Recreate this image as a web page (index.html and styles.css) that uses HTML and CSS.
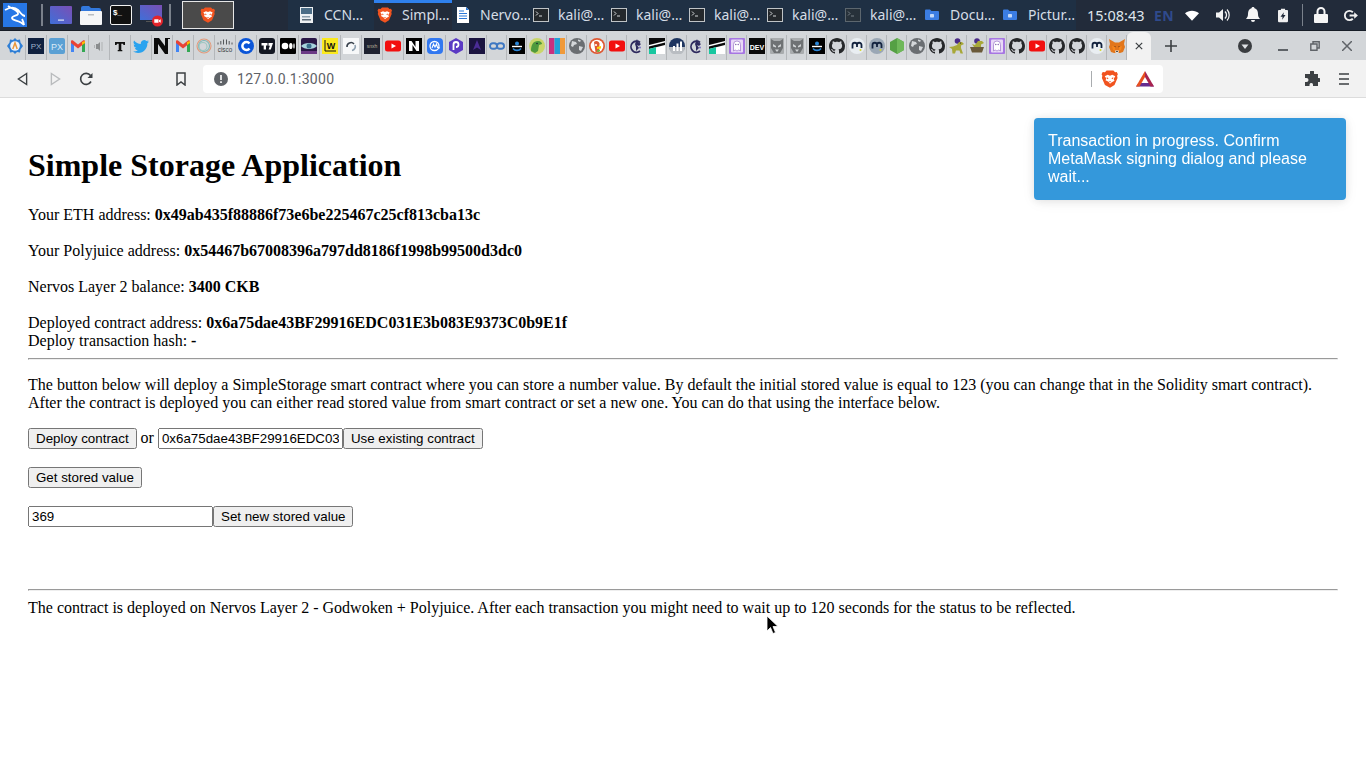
FILE: index.html
```html
<!DOCTYPE html>
<html lang="en">
<head>
<meta charset="utf-8">
<title>Simple Storage Application</title>
<link rel="stylesheet" href="styles.css">
</head>
<body>
<svg class="defs" width="0" height="0" aria-hidden="true">
  <defs><linearGradient id="grad" x1="0" y1="1" x2="1" y2="0"><stop offset="0" stop-color="#3f6fd8"/><stop offset="1" stop-color="#7a4fb5"/></linearGradient></defs>
  <symbol id="gear" viewBox="0 0 16 16"><path fill="#2f7fd6" d="M8 0l2 2 3-.5.5 3L16 8l-2.500 3.500-.5 3-3-.5-2 2-2-2-3 .5-.5-3L0 8l2.500-3.500.5-3 3 .5z"/><circle cx="8" cy="8" r="4.800" fill="#eef3f8"/><path fill="none" stroke="#e8973a" stroke-width="1.500" d="M5.800 11L8 5l2.200 6"/></symbol>
  <symbol id="gmail" viewBox="0 0 16 16"><path fill="#4285f4" d="M1 14V4l3 2v8z"/><path fill="#34a853" d="M15 14V4l-3 2v8z"/><path fill="#ea4335" d="M1 5V3.500C1 2.500 2 2 3 2.600L8 6.500l5-3.900C14 2 15 2.500 15 3.500V5l-7 5.500z"/><path fill="#fbbc04" d="M12 4l3-1v2l-3 2z"/></symbol>
  <symbol id="speak" viewBox="0 0 16 16"><path fill="#8a8d8f" d="M5 6h2l2-2v9l-2-2H5z"/><path fill="#b0b2b4" d="M10.500 4h1v9h-1zM3 7h1v3H3z"/></symbol>
  <symbol id="tt" viewBox="0 0 16 16"><path fill="#111" d="M3 4h10v3h-1.500L11 5.800H9.300V12h1v1.200H5.700V12h1V5.800H5L4.500 7H3z"/></symbol>
  <symbol id="tw" viewBox="0 0 16 16"><path fill="#2aa3ef" d="M5.026 15c6.038 0 9.341-5.003 9.341-9.334 0-.14 0-.282-.006-.422A6.685 6.685 0 0 0 16 3.542a6.658 6.658 0 0 1-1.889.518 3.301 3.301 0 0 0 1.447-1.817 6.533 6.533 0 0 1-2.087.793A3.286 3.286 0 0 0 7.875 6.030a9.325 9.325 0 0 1-6.767-3.429 3.289 3.289 0 0 0 1.018 4.382A3.323 3.323 0 0 1 .640 6.575v.045a3.288 3.288 0 0 0 2.632 3.218 3.203 3.203 0 0 1-.865.115 3.230 3.230 0 0 1-.614-.057 3.283 3.283 0 0 0 3.067 2.277A6.588 6.588 0 0 1 .780 13.580a6.320 6.320 0 0 1-.780-.045A9.344 9.344 0 0 0 5.026 15z"/></symbol>
  <symbol id="nbig" viewBox="0 0 16 16"><path fill="#0b0b0b" d="M0 0h5l6 8V0h5v1h-2v15h-3L4 6v10H0V1z"/></symbol>
  <symbol id="rings" viewBox="0 0 16 16"><g fill="none" stroke-width="1.100"><circle cx="8" cy="8" r="7" stroke="#e39a7a"/><circle cx="8" cy="8" r="5.500" stroke="#7fb5b5"/><circle cx="7" cy="8.500" r="4" stroke="#9cc7c0"/></g></symbol>
  <symbol id="coin" viewBox="0 0 16 16"><circle cx="8" cy="8" r="8" fill="#0a55d8"/><path fill="none" stroke="#fff" stroke-width="2.500" d="M11.500 5.500a4 4 0 1 0 0 5"/></symbol>
  <symbol id="tv" viewBox="0 0 16 16"><rect width="16" height="16" rx="3" fill="#131722"/><path fill="#fff" d="M2.500 5h6v2.500H7V11.500H4.700V7.500H2.500zM9.500 5H14l-2.200 6.500H9.600l1.300-3.800H9.500z"/></symbol>
  <symbol id="med" viewBox="0 0 16 16"><rect width="16" height="16" rx="1" fill="#000"/><circle cx="5" cy="8" r="3.300" fill="#fff"/><ellipse cx="10.800" cy="8" rx="1.700" ry="3.100" fill="#fff"/><ellipse cx="14" cy="8" rx=".7" ry="2.800" fill="#fff"/></symbol>
  <symbol id="eye" viewBox="0 0 16 16"><rect width="16" height="16" rx="2" fill="#2a1747"/><path fill="#a8d3dd" d="M0 8c3-4 13-4 16 0-3 4-13 4-16 0z"/><circle cx="8" cy="8" r="2.500" fill="#3a6d8c"/><rect y="13" width="16" height="3" fill="#6b3a86"/></symbol>
  <symbol id="swirl" viewBox="0 0 16 16"><rect width="16" height="16" fill="#f7f8f9"/><path fill="none" stroke="#39424d" stroke-width="1.600" d="M4 9a4 4 0 0 1 7-3"/><path fill="none" stroke="#8ea0b0" stroke-width="1.600" d="M12 7a4 4 0 0 1-3 5.500"/></symbol>
  <symbol id="yt" viewBox="0 0 16 16"><rect y="2.500" width="16" height="11" rx="2.500" fill="#f20f0f"/><path fill="#fff" d="M6.500 5.500l4.500 2.500-4.500 2.500z"/></symbol>
  <symbol id="nb" viewBox="0 0 16 16"><rect width="16" height="16" fill="#000"/><path fill="#fff" d="M3 3h2.500l4 6V3H13v10h-2.500l-4-6v6H3z"/></symbol>
  <symbol id="cmc" viewBox="0 0 16 16"><rect width="16" height="16" rx="4" fill="#3278f0"/><circle cx="7.500" cy="8" r="4.500" fill="none" stroke="#fff" stroke-width="1.300"/><path fill="none" stroke="#fff" stroke-width="1.100" d="M5 10l1.500-4L8 9l1.500-3 1 3.500 2.500.5"/></symbol>
  <symbol id="hexp" viewBox="0 0 16 16"><path fill="#5b3ac4" d="M8 0l7 4v8l-7 4-7-4V4z"/><path fill="none" stroke="#fff" stroke-width="1.800" d="M5.500 12V6.500a2.500 2.500 0 1 1 2.500 2.500"/></symbol>
  <symbol id="dpur" viewBox="0 0 16 16"><rect width="16" height="16" fill="#1b1440"/><path fill="#4b2c96" d="M8 2l4 10-4-2.500L4 12z"/></symbol>
  <symbol id="chain" viewBox="0 0 16 16"><g fill="none" stroke="#3f78c2" stroke-width="1.900"><rect x="1" y="5.200" width="7" height="5.600" rx="2.800"/><rect x="8" y="5.200" width="7" height="5.600" rx="2.800"/></g></symbol>
  <symbol id="arc" viewBox="0 0 16 16"><rect width="16" height="16" fill="#000"/><circle cx="8" cy="5.500" r="2" fill="#2a86d8"/><path fill="none" stroke="#fff" stroke-width="1.400" d="M3 8.500h10"/><path fill="none" stroke="#2a86d8" stroke-width="1.600" d="M4 10.500c2 2.500 6 2.500 8 0"/></symbol>
  <symbol id="parrot" viewBox="0 0 16 16"><circle cx="8" cy="8" r="8" fill="#c9d66a"/><path fill="#4f9a3d" d="M2 13c0-6 2-10 7-10 3 0 4 2 4 3l-3 1-1 6-3 2z"/><circle cx="8" cy="5.500" r=".8" fill="#123"/></symbol>
  <symbol id="stripes" viewBox="0 0 16 16"><path fill="#c8307f" d="M0 0h5.500v16H0z"/><path fill="#21a0d8" d="M5.500 0H11v16H5.500z"/><path fill="#f09a3a" d="M11 0h5v16h-5z"/></symbol>
  <symbol id="globe" viewBox="0 0 16 16"><circle cx="8" cy="8" r="8" fill="#6a6e72"/><path fill="#d3d6d9" d="M3 3l4 1 1 2-3 1-1 2-2-1zM10 8l4 1-2 4-2-1zM9 1.500l3 1-1 1.500-2-1z"/></symbol>
  <symbol id="duck" viewBox="0 0 16 16"><circle cx="8" cy="8" r="8" fill="#de5833"/><circle cx="8" cy="8" r="6.300" fill="#fff"/><path fill="#de5833" d="M5 4c2-2 5-1 5.500 1.500L10 14H6.500z"/><circle cx="7" cy="7" r="1.100" fill="#fff"/><path fill="#fdd209" d="M8 9l4-1v2.500l-4 .5z"/><path fill="#65bc46" d="M8 12.500l3-1v2l-3 .5z"/></symbol>
  <symbol id="knight" viewBox="0 0 16 16"><path fill="none" stroke="#2e2a5e" stroke-width="1.800" d="M11 4.500A5.500 5.500 0 1 0 11 13"/><path fill="#2e2a5e" d="M8 1l1 3 3 2-2 2-2-1 2 3-3 3V9L6 6z"/><circle cx="11" cy="9.500" r="1" fill="#7a6fc2"/></symbol>
  <symbol id="flag" viewBox="0 0 16 16"><rect width="16" height="16" fill="#fff"/><path fill="#0c0c0c" d="M0 0h16v3L0 7z"/><path fill="#0c0c0c" d="M0 8.500l16-4V7L0 11z"/><path fill="#19c7a0" d="M0 11l7-2v7H0z"/></symbol>
  <symbol id="mchart" viewBox="0 0 16 16"><circle cx="8" cy="8" r="8" fill="#1e3560"/><path fill="#b9bdc2" d="M0 9h16a8 8 0 0 1-16 0z"/><path fill="#fff" d="M4 8h2v5H4zM7.500 5.500h2V13h-2zM11 3.500h2V13h-2z"/></symbol>
  <symbol id="ghost" viewBox="0 0 16 16"><rect width="16" height="16" rx="1" fill="#a676e2"/><rect x="2" y="1.500" width="12" height="13" rx="1" fill="#e8d9f7"/><path fill="#fff" stroke="#9a75c8" stroke-width=".7" d="M4.500 13V6.500a3.500 3.500 0 0 1 7 0V13l-1.700-1-1.800 1-1.800-1z"/><circle cx="6.800" cy="6.500" r=".7" fill="#7a5aa8"/><circle cx="9.200" cy="6.500" r=".7" fill="#7a5aa8"/></symbol>
  <symbol id="wolf" viewBox="0 0 16 16"><rect x="1" y="0" width="14" height="16" rx="1" fill="#a9acae"/><path fill="#6f7274" d="M2 1l3 2h6l3-2v9l-3 5H5l-3-5z"/><path fill="#d0d3d5" d="M4 6l3 2v1.500L4 8.500zM12 6L9 8v1.500l3-1zM6 11.500h4L8 14z"/></symbol>
  <symbol id="gh" viewBox="0 0 16 16"><path fill="#26282a" d="M8 0C3.580 0 0 3.580 0 8c0 3.540 2.290 6.530 5.470 7.590.4.070.55-.17.55-.38 0-.19-.01-.82-.01-1.490-2.010.37-2.530-.49-2.690-.94-.09-.23-.48-.94-.82-1.130-.28-.15-.68-.52-.01-.53.630-.01 1.080.58 1.230.82.720 1.210 1.870.87 2.330.66.070-.52.280-.87.510-1.070-1.780-.2-3.640-.89-3.640-3.950 0-.87.310-1.590.820-2.150-.08-.2-.36-1.020.08-2.120 0 0 .670-.21 2.200.82.640-.18 1.320-.27 2-.27.680 0 1.360.090 2 .27 1.530-1.040 2.200-.82 2.200-.82.440 1.100.160 1.920.080 2.120.510.560.820 1.270.820 2.150 0 3.070-1.870 3.750-3.650 3.950.290.250.540.730.540 1.480 0 1.070-.01 1.930-.01 2.200 0 .21.150.46.550.38A8.013 8.013 0 0 0 16 8c0-4.420-3.580-8-8-8z"/></symbol>
  <symbol id="mw" viewBox="0 0 16 16"><circle cx="8" cy="8" r="8" fill="#e9eef2"/><path fill="none" stroke="#13233f" stroke-width="1.800" d="M3.500 10.500V7a2 2 0 0 1 4.500 0v2M8 7a2 2 0 0 1 4.500 0v3"/><circle cx="11.500" cy="12" r="1" fill="#d4d52a"/></symbol>
  <symbol id="mg" viewBox="0 0 16 16"><circle cx="8" cy="8" r="8" fill="#9aa7b5"/><path fill="none" stroke="#13233f" stroke-width="1.800" d="M3.500 10.500V7a2 2 0 0 1 4.500 0v2M8 7a2 2 0 0 1 4.500 0v3"/><circle cx="11.500" cy="12" r="1" fill="#d4d52a"/></symbol>
  <symbol id="node" viewBox="0 0 16 16"><path fill="#55a044" d="M8 0l7 4v8l-7 4-7-4V4z"/><path fill="#6fb85a" d="M8 0l7 4v8l-7 4z"/></symbol>
  <symbol id="dino" viewBox="0 0 16 16"><circle cx="8.500" cy="3" r="2.800" fill="#4a2a86"/><path fill="#a8a838" d="M10 4h3l2 2-3 1.500V10l2 5.500h-2.500l-1-3H7l-1 3H3.500L3 11 0 9l4-.5L8 7z"/><circle cx="11.500" cy="5" r=".6" fill="#222"/></symbol>
  <symbol id="dinon" viewBox="0 0 16 16"><circle cx="8" cy="3" r="2.800" fill="#4a2a86"/><path fill="#a8a838" d="M9 3h4l2 2-3 1.500V9H5L3 6l3 1z"/><path fill="#6a5a3a" d="M1 9h14l-2 5.500H3z"/></symbol>
  <symbol id="fox" viewBox="0 0 16 16"><path fill="#e2761b" d="M0 1l6 3.500h4L16 1l-1 5 1 3-2 5-3 1H5l-3-1-2-5 1-3z"/><path fill="#f6851b" d="M3 8l3 1v4l-2-1zM13 8l-3 1v4l2-1z"/><path fill="#763d16" d="M5 8h1.500v1.500zM11 8H9.500v1.500z"/><path fill="#e4e0d8" d="M6 12.500h4L9.500 15h-3z"/><path fill="#222" d="M7 13h2l-.5 1h-1z"/></symbol>
  <symbol id="brave" viewBox="0 0 16 16"><path fill="#f1531f" d="M5 .500h6L12.500 2l1.500-.2 1 2-.7 1.200.4 2-2.700 6.300L8 15.800 3.500 13.300.8 7l.4-2L.5 3.800l1-2L3.500 2z"/><path fill="#fff" d="M3.300 5.500L6 4.300l2 .7 2-.7 2.700 1.200-1.500 2.500.8 1.500-2.700 1.500L8 12.300l-1.300-1.800L4 9l.8-1.500z"/><path fill="#f1531f" d="M6.800 7.300L5 6.500l.5 1.800zM9.200 7.300l1.800-.8-.5 1.800zM7 10h2l-1 1.200z"/></symbol>
  <symbol id="term" viewBox="0 0 16 16"><rect x=".5" y="1.500" width="15" height="13" fill="#24282c" stroke="#bfc3c6"/><path fill="none" stroke="#d6d9db" d="M3 4.500l2 2-2 2M6 9h3"/></symbol>
  <symbol id="termd" viewBox="0 0 16 16"><rect x=".5" y="1.500" width="15" height="13" fill="#2a3238" stroke="#6c7479"/><path fill="none" stroke="#8b9398" d="M3 4.500l2 2-2 2M6 9h3"/></symbol>
  <symbol id="fold" viewBox="0 0 16 16"><path fill="#3b7de3" d="M1 3.500a1 1 0 0 1 1-1h4L7.500 4H14a1 1 0 0 1 1 1v7a1 1 0 0 1-1 1H2a1 1 0 0 1-1-1z"/><rect x="6" y="7" width="4" height="3.500" rx=".7" fill="#c4d9f8"/></symbol>
  <symbol id="doc" viewBox="0 0 16 16"><path fill="#fff" d="M2 0h9l3 3v13H2z"/><path fill="#2b78d8" d="M11 0l3 3h-3zM4 6h8v1H4zM4 8.500h8v1H4zM4 11h8v1H4zM4 3.500h5v1H4z"/></symbol>
  <symbol id="ccn" viewBox="0 0 16 16"><rect x="1" width="13" height="16" fill="#eef1f3"/><rect x="2" y="1" width="11" height="6" fill="#4c6d86"/><rect x="3" y="9" width="8" height="1.500" fill="#8ea0ad"/><rect x="3" y="12" width="9" height="1.500" fill="#5f6f7b"/></symbol>
</svg>

<div class="taskbar">
  <div class="launchers">
    <svg class="kali" viewBox="0 0 24 24"><rect width="24" height="24" fill="#2777e6"/><path fill="none" stroke="#fff" stroke-width="1.800" d="M2 7c5-3 10-3 13 0 3 3 4 6 7 6M5 3c4 3 9 4 10 7 1 3-6 2-6 5 0 3 8 2 12 7M19 16c1 2 2 4 2 6"/></svg>
    <span class="vsep vsep-a"></span>
    <svg class="launch launch-a" viewBox="0 0 22 18"><rect width="22" height="18" rx="1" fill="url(#grad)"/><rect x="8" y="13.500" width="6" height="1.200" fill="#dfe6f5"/></svg>
    <svg class="launch" viewBox="0 0 22 20"><path fill="#3278dc" d="M1 3a2 2 0 0 1 2-2h6l2 2h8a2 2 0 0 1 2 2v3H1z"/><rect y="6" width="22" height="14" rx="1" fill="#f5f6f7"/><rect x="8" y="9" width="6" height="1.500" fill="#b9bdc2"/></svg>
    <svg class="launch" viewBox="0 0 22 20"><rect x=".5" y=".5" width="21" height="19" rx="1.500" fill="#111" stroke="#f2f2f2"/><text x="3" y="10" class="ft" font-size="8" font-weight="700" fill="#fff">$_</text></svg>
    <svg class="launch launch-last" viewBox="0 0 22 20"><rect width="22" height="15" fill="url(#grad)"/><rect x="6" y="16" width="10" height="1" fill="#555"/><circle cx="17.500" cy="16" r="5.500" fill="#e3242b"/><path fill="#fff" d="M14.300 14.300h4.200v3.400h-4.200zM19 15.300l1.700-1.100v3.600L19 16.700z"/></svg>
    <span class="vsep vsep-b"></span>
    <div class="brave-btn"><svg class="ic16" aria-hidden="true"><use href="#brave"/></svg></div>
  </div>
  <div class="tasks">
    <div class="task"><svg class="ic16"><use href="#ccn"/></svg><span>CCN…</span></div>
    <div class="task active"><svg class="ic16"><use href="#brave"/></svg><span>Simpl…</span></div>
    <div class="task"><svg class="ic16"><use href="#doc"/></svg><span>Nervo…</span></div>
    <div class="task"><svg class="ic16"><use href="#term"/></svg><span>kali@…</span></div>
    <div class="task"><svg class="ic16"><use href="#term"/></svg><span>kali@…</span></div>
    <div class="task"><svg class="ic16"><use href="#term"/></svg><span>kali@…</span></div>
    <div class="task"><svg class="ic16"><use href="#term"/></svg><span>kali@…</span></div>
    <div class="task dim"><svg class="ic16"><use href="#termd"/></svg><span>kali@…</span></div>
    <div class="task task-f"><svg class="ic16"><use href="#fold"/></svg><span>Docu…</span></div>
    <div class="task task-f"><svg class="ic16"><use href="#fold"/></svg><span>Pictur…</span></div>
  </div>
  <div class="tray">
    <span class="clock">15:08:43</span>
    <span class="lang">EN</span>
    <svg class="wifi" viewBox="0 0 16 12"><path fill="#fff" d="M0 3.500C4-.5 12-.5 16 3.500L8 12z"/></svg>
    <svg class="vol" viewBox="0 0 16 16"><path fill="#f2f2f2" d="M1 5.500h3L8 2v12l-4-3.500H1z"/><path fill="none" stroke="#f2f2f2" stroke-width="1.500" d="M10 4.500a5 5 0 0 1 0 7"/><path fill="none" stroke="#f2f2f2" stroke-width="1.200" d="M12 2.500a8 8 0 0 1 0 11"/></svg>
    <svg class="bell" viewBox="0 0 14 16"><path fill="#f5f5f5" d="M7 0c1 0 1.500.6 1.500 1.300C11 2 12 4 12 7c0 2 .6 3.500 2 5H0c1.400-1.500 2-3 2-5 0-3 1-5 3.500-5.700C5.500.6 6 0 7 0zM5 13h4a2 2 0 0 1-4 0z"/></svg>
    <svg class="batt" viewBox="0 0 12 16"><path fill="#f0f0f0" d="M3.500 0h5v1.500H11a1 1 0 0 1 1 1V15a1 1 0 0 1-1 1H1a1 1 0 0 1-1-1V2.500a1 1 0 0 1 1-1h2.500z"/><path fill="#1d2636" d="M7 4L3 9.500h2.500L5 13l4-5.500H6.500z"/></svg>
    <span class="vsep vsep-c"></span>
    <svg class="lock" viewBox="0 0 14 16"><path fill="none" stroke="#f5f5f5" stroke-width="2" d="M3.500 8V4.500a3.500 3.500 0 0 1 7 0V8"/><rect y="7" width="14" height="9" rx="1" fill="#f5f5f5"/></svg>
    <svg class="power" viewBox="0 0 16 14"><path fill="none" stroke="#f0f0f0" stroke-width="2" d="M10.500 3.500a5 5 0 1 0 0 7"/><path fill="#f0f0f0" d="M7 6h5V3.500L16 7l-4 3.500V8H7z"/></svg>
  </div>
</div>

<div class="tabstrip">
  <span class="fav"><svg class="ic16"><use href="#gear"/></svg></span>
  <span class="fav"><svg class="ic16" viewBox="0 0 16 16"><rect width="16" height="16" fill="#10213f"/><text x="8" y="11" class="ft" font-size="8" fill="#9fb3cc" text-anchor="middle">PX</text></svg></span>
  <span class="fav"><svg class="ic16" viewBox="0 0 16 16"><rect width="16" height="16" rx="2" fill="#5aa0d4"/><text x="8" y="11.500" class="ft" font-size="9" fill="#dcebf6" text-anchor="middle">PX</text></svg></span>
  <span class="fav"><svg class="ic16"><use href="#gmail"/></svg></span>
  <span class="fav"><svg class="ic16"><use href="#speak"/></svg></span>
  <span class="fav"><svg class="ic16"><use href="#tt"/></svg></span>
  <span class="fav"><svg class="ic16"><use href="#tw"/></svg></span>
  <span class="fav"><svg class="ic16"><use href="#nbig"/></svg></span>
  <span class="fav"><svg class="ic16"><use href="#gmail"/></svg></span>
  <span class="fav"><svg class="ic16"><use href="#rings"/></svg></span>
  <span class="fav"><svg class="ic16" viewBox="0 0 16 16"><path stroke="#44484c" stroke-width=".9" d="M1 4.500v2M3.800 3v3.500M6.500 1.500v5M9.500 1.500v5M12.200 3v3.500M15 4.500v2"/><text x="8" y="14" class="ft" font-size="6.300" fill="#3b3f43" text-anchor="middle">cisco</text></svg></span>
  <span class="fav"><svg class="ic16"><use href="#coin"/></svg></span>
  <span class="fav"><svg class="ic16"><use href="#tv"/></svg></span>
  <span class="fav"><svg class="ic16"><use href="#med"/></svg></span>
  <span class="fav"><svg class="ic16"><use href="#eye"/></svg></span>
  <span class="fav"><svg class="ic16" viewBox="0 0 16 16"><rect width="16" height="16" fill="#fbe91e"/><path fill="none" stroke="#111" d="M3 2v11h11"/><text x="9" y="10.500" class="ft" font-size="9" font-weight="700" fill="#111" text-anchor="middle">W</text></svg></span>
  <span class="fav"><svg class="ic16"><use href="#swirl"/></svg></span>
  <span class="fav"><svg class="ic16" viewBox="0 0 16 16"><rect width="16" height="16" fill="#1f2230"/><text x="8" y="10" class="ft" font-size="5" fill="#b9b39d" text-anchor="middle">snxh</text></svg></span>
  <span class="fav"><svg class="ic16"><use href="#yt"/></svg></span>
  <span class="fav"><svg class="ic16"><use href="#nb"/></svg></span>
  <span class="fav"><svg class="ic16"><use href="#cmc"/></svg></span>
  <span class="fav"><svg class="ic16"><use href="#hexp"/></svg></span>
  <span class="fav nar"><svg class="ic16"><use href="#dpur"/></svg></span>
  <span class="fav nar"><svg class="ic16"><use href="#chain"/></svg></span>
  <span class="fav nar"><svg class="ic16"><use href="#arc"/></svg></span>
  <span class="fav nar"><svg class="ic16"><use href="#parrot"/></svg></span>
  <span class="fav nar"><svg class="ic16"><use href="#stripes"/></svg></span>
  <span class="fav nar"><svg class="ic16"><use href="#globe"/></svg></span>
  <span class="fav nar"><svg class="ic16"><use href="#duck"/></svg></span>
  <span class="fav nar"><svg class="ic16"><use href="#yt"/></svg></span>
  <span class="fav nar"><svg class="ic16"><use href="#knight"/></svg></span>
  <span class="fav nar"><svg class="ic16"><use href="#flag"/></svg></span>
  <span class="fav nar"><svg class="ic16"><use href="#mchart"/></svg></span>
  <span class="fav nar"><svg class="ic16"><use href="#knight"/></svg></span>
  <span class="fav nar"><svg class="ic16"><use href="#flag"/></svg></span>
  <span class="fav nar"><svg class="ic16"><use href="#ghost"/></svg></span>
  <span class="fav nar"><svg class="ic16" viewBox="0 0 16 16"><rect width="16" height="16" fill="#0a0a0a"/><text x="8" y="11.500" class="ft" font-size="8" font-weight="700" fill="#fff" text-anchor="middle" textLength="14.500" lengthAdjust="spacingAndGlyphs">DEV</text></svg></span>
  <span class="fav nar"><svg class="ic16"><use href="#wolf"/></svg></span>
  <span class="fav nar"><svg class="ic16"><use href="#wolf"/></svg></span>
  <span class="fav nar"><svg class="ic16"><use href="#arc"/></svg></span>
  <span class="fav nar"><svg class="ic16"><use href="#gh"/></svg></span>
  <span class="fav nar"><svg class="ic16"><use href="#mw"/></svg></span>
  <span class="fav nar"><svg class="ic16"><use href="#mg"/></svg></span>
  <span class="fav nar"><svg class="ic16"><use href="#node"/></svg></span>
  <span class="fav nar"><svg class="ic16"><use href="#globe"/></svg></span>
  <span class="fav nar"><svg class="ic16"><use href="#gh"/></svg></span>
  <span class="fav nar"><svg class="ic16"><use href="#dino"/></svg></span>
  <span class="fav nar"><svg class="ic16"><use href="#dinon"/></svg></span>
  <span class="fav nar"><svg class="ic16"><use href="#ghost"/></svg></span>
  <span class="fav nar"><svg class="ic16"><use href="#gh"/></svg></span>
  <span class="fav nar"><svg class="ic16"><use href="#yt"/></svg></span>
  <span class="fav nar"><svg class="ic16"><use href="#gh"/></svg></span>
  <span class="fav nar"><svg class="ic16"><use href="#gh"/></svg></span>
  <span class="fav nar"><svg class="ic16"><use href="#mw"/></svg></span>
  <span class="fav nar"><svg class="ic16"><use href="#fox"/></svg></span>
  <div class="tab-active"><svg class="x-ic" viewBox="0 0 10 10"><path stroke="#3c4043" stroke-width="1.500" d="M1 1l8 8M9 1l-8 8"/></svg></div>
  <svg class="plus" viewBox="0 0 12 12"><path stroke="#3c4043" stroke-width="1.600" d="M6 0v12M0 6h12"/></svg>
  <svg class="tabsearch" viewBox="0 0 14 14"><circle cx="7" cy="7" r="7" fill="#3a3d40"/><path fill="#e0e2e4" d="M3.500 5.500h7L7 10z"/></svg>
  <span class="win-min"></span>
  <svg class="win-max" viewBox="0 0 10 10"><path fill="none" stroke="#5f6368" stroke-width="1.400" d="M3 3V.8h6.200V7H7M.8 3H7v6.200H.8z"/></svg>
  <svg class="win-close" viewBox="0 0 10 10"><path stroke="#5f6368" stroke-width="1.500" d="M0 0l10 10M10 0L0 10"/></svg>
</div>

<div class="toolbar">
  <svg class="tb-back" viewBox="0 0 12 14"><path fill="none" stroke="#3c4043" stroke-width="1.500" d="M10.500 1L1.500 7l9 6z"/></svg>
  <svg class="tb-fwd" viewBox="0 0 12 14"><path fill="none" stroke="#b9bbbd" stroke-width="1.500" d="M1.500 1l9 6-9 6z"/></svg>
  <svg class="tb-reload" viewBox="0 0 14 14"><path fill="none" stroke="#3c4043" stroke-width="1.600" d="M12 9.500A5.500 5.500 0 1 1 11.500 3.500"/><path fill="#3c4043" d="M13.500 1v5h-5z"/></svg>
  <svg class="tb-mark" viewBox="0 0 10 14"><path fill="none" stroke="#3c4043" stroke-width="1.500" d="M1 1h8v12L5 10l-4 3z"/></svg>
  <div class="omnibox">
    <svg class="info" viewBox="0 0 14 14"><circle cx="7" cy="7" r="7" fill="#5f6368"/><path fill="#fff" d="M6.200 3h1.600v5H6.200zM6.200 9.300h1.600V11H6.200z"/></svg>
    <span class="url">127.0.0.1:3000</span>
    <span class="omni-sep"></span>
    <svg class="omni-brave"><use href="#brave"/></svg>
    <svg class="bat" viewBox="0 0 18 16"><path fill="#662d91" d="M0 15.500h18L15.500 12h-13z"/><path fill="#e8501f" d="M9 0L0 15.500h3.500L9 6z"/><path fill="#a8234f" d="M9 0l9 15.500h-3.500L9 6z"/></svg>
  </div>
  <svg class="puzzle" viewBox="0 0 16 16"><path fill="#3c4043" d="M6 1a2 2 0 0 1 4 0v2h4v4h1a2 2 0 0 1 0 4h-1v4H9v-1.500a1.800 1.800 0 0 0-3.500 0V15H1v-4h1.500a2 2 0 0 0 0-4H1V3h5z"/></svg>
  <svg class="menu" viewBox="0 0 10 12"><path stroke="#3c4043" stroke-width="1.500" d="M0 1h10M0 6h10M0 11h10"/></svg>
</div>

<main class="page">
  <h1>Simple Storage Application</h1>
  Your ETH address: <b>0x49ab435f88886f73e6be225467c25cf813cba13c</b><br><br>
  Your Polyjuice address: <b>0x54467b67008396a797dd8186f1998b99500d3dc0</b><br><br>
  Nervos Layer 2 balance: <b>3400 CKB</b><br><br>
  Deployed contract address: <b>0x6a75dae43BF29916EDC031E3b083E9373C0b9E1f</b><br>
  Deploy transaction hash: <b>-</b><br>
  <hr>
  <p>The button below will deploy a SimpleStorage smart contract where you can store a number value. By default the initial stored value is equal to 123 (you can change that in the Solidity smart contract). After the contract is deployed you can either read stored value from smart contract or set a new one. You can do that using the interface below.</p>
  <button class="btn" type="button">Deploy contract</button> or <input class="field" value="0x6a75dae43BF29916EDC031E3b083E9373C0b9E1f"><button class="btn" type="button">Use existing contract</button><br><br>
  <button class="btn" type="button">Get stored value</button><br><br>
  <input class="field" type="number" value="369"><button class="btn" type="button">Set new stored value</button><br><br><br><br>
  <hr>
  The contract is deployed on Nervos Layer 2 - Godwoken + Polyjuice. After each transaction you might need to wait up to 120 seconds for the status to be reflected.
</main>

<div class="toast">Transaction in progress. Confirm MetaMask signing dialog and please wait...</div>
<svg class="cursor" viewBox="0 0 13 20"><path fill="#000" stroke="#fff" stroke-width=".8" d="M1 1v15l3.500-3.500 2.500 6 2.500-1-2.500-6h5z"/></svg>
</body>
</html>
```
FILE: styles.css
```css
html, body { margin: 0; padding: 0; background: #fff; }
body { font-family: "Liberation Serif", serif; font-size: 16px; color: #000; overflow: hidden; height: 768px; }
.defs { position: absolute; }
.ft { font-family: "Liberation Sans", sans-serif; }
.ic16 { width: 16px; height: 16px; display: block; flex: none; }

/* desktop panel */
.taskbar { height: 30px; background: #222b3a; display: flex; align-items: center; font-family: "Noto Sans", sans-serif; font-size: 14px; color: #d5dde6; border-bottom: 1px solid #161c26; }
.launchers { width: 288px; flex: none; height: 30px; display: flex; align-items: center; padding-left: 3px; box-sizing: border-box; }
.kali { width: 24px; height: 24px; flex: none; }
.vsep { display: block; width: 2px; height: 22px; background: #7a818b; flex: none; }
.vsep-a { margin: 0 7px 0 14px; }
.vsep-b { margin: 0 11px 0 7px; }
.launch { width: 22px; height: 20px; flex: none; margin-right: 8px; overflow: visible; }
.launch-a { height: 18px; }
.launch-last { margin-right: 0; }
.brave-btn { width: 52px; height: 28px; box-sizing: border-box; border: 1px solid #e6e6e6; background: #4a4a4a; display: flex; align-items: center; justify-content: center; flex: none; }
.tasks { width: 788px; flex: none; height: 30px; box-sizing: border-box; padding-left: 8px; background: #1f3044; display: flex; }
.task { width: 78px; flex: none; height: 30px; box-sizing: border-box; padding-left: 3px; display: flex; align-items: center; gap: 9px; white-space: nowrap; overflow: hidden; border-top: 3px solid transparent; }
.task span { line-height: 24px; margin-top: -3px; }
.task .ic16 { margin-top: -3px; }
.task-f { gap: 10px; padding-left: 4px; }
.task.active { background: #222b3a; border-top-color: #2f80ed; }
.task.dim .ic16 { opacity: .8; }
.tray { flex: 1; height: 30px; display: flex; align-items: center; padding-left: 11px; box-sizing: border-box; }
.clock { font-size: 14.500px; color: #dfe5ec; width: 67px; flex: none; }
.lang { font-size: 14px; font-weight: 700; color: #2f4a8c; width: 31px; flex: none; letter-spacing: .5px; }
.wifi { width: 14px; height: 11px; flex: none; margin-right: 16px; }
.vol { width: 16px; height: 16px; flex: none; margin-right: 15px; }
.bell { width: 14px; height: 16px; flex: none; margin-right: 18px; }
.batt { width: 10px; height: 15px; flex: none; margin-right: 14px; }
.vsep-c { height: 22px; width: 1px; margin-right: 11px; }
.lock { width: 14px; height: 16px; flex: none; margin-right: 15px; }
.power { width: 15px; height: 13px; flex: none; }

/* browser tab strip */
.tabstrip { height: 29px; background: #d3d6d9; display: flex; align-items: center; padding-left: 5px; box-sizing: border-box; }
.fav { width: 21px; height: 25px; flex: none; align-self: flex-end; display: flex; align-items: center; justify-content: center; box-sizing: border-box; border-right: 1px solid #b4b7ba; padding-bottom: 3px; }
.fav.nar { width: 20px; }
.tab-active { width: 24px; height: 28px; align-self: flex-end; flex: none; background: #f2f2f2; border-radius: 6px 6px 0 0; display: flex; align-items: center; justify-content: center; }
.x-ic { width: 8px; height: 8px; }
.plus { width: 12px; height: 12px; flex: none; margin-left: 14px; }
.tabsearch { width: 14px; height: 14px; flex: none; margin-left: 61px; }
.win-min { display: block; width: 10px; height: 2px; background: #5f6368; flex: none; margin: 9px 0 0 26px; }
.win-max { width: 10px; height: 10px; flex: none; margin-left: 22px; }
.win-close { width: 10px; height: 10px; flex: none; margin-left: 22px; }

/* browser toolbar */
.toolbar { height: 38px; box-sizing: border-box; background: #f2f2f2; border-bottom: 1px solid #dcdcdc; display: flex; align-items: center; padding: 1px 0 0 17px; }
.tb-back, .tb-fwd { width: 11px; height: 14px; flex: none; }
.tb-fwd { margin-left: 22px; }
.tb-reload { width: 14px; height: 14px; flex: none; margin-left: 18px; }
.tb-mark { width: 10px; height: 14px; flex: none; margin-left: 83px; }
.omnibox { width: 960px; height: 28px; flex: none; margin-left: 17px; background: #fff; border-radius: 4px; display: flex; align-items: center; padding-left: 11px; box-sizing: border-box; }
.info { width: 14px; height: 14px; flex: none; }
.url { font-family: "Roboto", sans-serif; font-size: 14px; letter-spacing: .3px; color: #5f6368; margin-left: 9px; width: 854px; flex: none; }
.omni-sep { display: block; width: 1px; height: 16px; background: #a9acaf; flex: none; }
.omni-brave { width: 18px; height: 18px; flex: none; margin-left: 9px; }
.bat { width: 18px; height: 16px; flex: none; margin-left: 17px; }
.puzzle { width: 16px; height: 16px; flex: none; margin-left: 141px; }
.menu { width: 10px; height: 12px; flex: none; margin-left: 19px; }

/* page */
.page { padding: 28px; }
.btn, .field { font-family: "Liberation Sans", sans-serif; font-size: 13.333px; }
.toast { position: fixed; top: 118px; right: 20px; width: 312px; box-sizing: border-box; padding: 14px; background: #3498db; color: #fff; border-radius: 4px; font-family: "Liberation Sans", sans-serif; font-size: 16px; line-height: 18px; box-shadow: 0 1px 10px rgba(0,0,0,.1), 0 2px 15px rgba(0,0,0,.05); }
.cursor { position: fixed; left: 766px; top: 615px; width: 13px; height: 20px; }
```
